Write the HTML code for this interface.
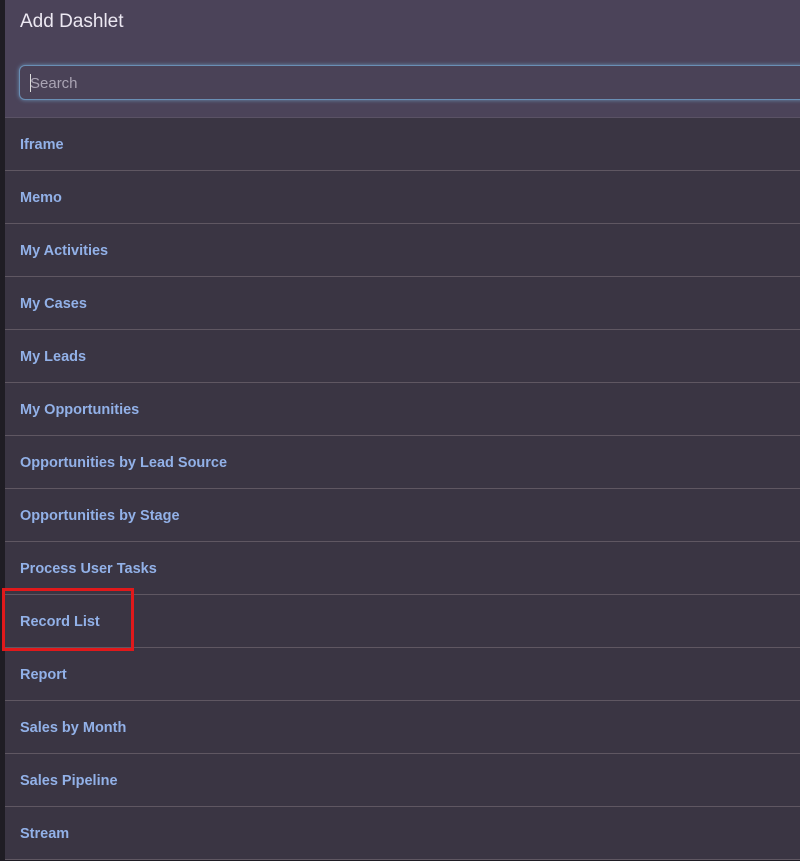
<!DOCTYPE html>
<html><head><style>
body{margin:0;width:800px;height:860px;overflow:hidden;background:#1f1d24;font-family:"Liberation Sans",sans-serif;}
.panel{position:absolute;left:5px;top:0;width:795px;height:860px;background:#3a3543;}
.head{height:117px;background:#4b4359;border-bottom:1px solid #5a5265;}
.title{position:absolute;left:15px;top:11px;color:#ece8f2;font-size:19px;}
.search{position:absolute;left:14px;top:65px;width:800px;height:35px;box-sizing:border-box;border:1px solid #6a8fb5;border-radius:6px;background:#4a4257;box-shadow:0 0 4px #6a8fb5;color:#aaa4b4;font-size:15px;line-height:36px;padding-left:10px;}
.search:before{content:"";position:absolute;left:10px;top:8px;width:1px;height:18px;background:#ddd;}
.row{height:52px;border-bottom:1px solid #5f5762;color:#92b1e8;font-weight:bold;font-size:14.5px;line-height:54px;padding-left:15px;}
.red{position:absolute;left:2px;top:588px;width:126px;height:57px;border:3px solid #e0191b;}
</style></head><body>
<div class="panel">
<div class="head"><div class="title">Add Dashlet</div><div class="search">Search</div></div>
<div class="row">Iframe</div>
<div class="row">Memo</div>
<div class="row">My Activities</div>
<div class="row">My Cases</div>
<div class="row">My Leads</div>
<div class="row">My Opportunities</div>
<div class="row">Opportunities by Lead Source</div>
<div class="row">Opportunities by Stage</div>
<div class="row">Process User Tasks</div>
<div class="row">Record List</div>
<div class="row">Report</div>
<div class="row">Sales by Month</div>
<div class="row">Sales Pipeline</div>
<div class="row">Stream</div>
</div>
<div class="red"></div>
</body></html>
